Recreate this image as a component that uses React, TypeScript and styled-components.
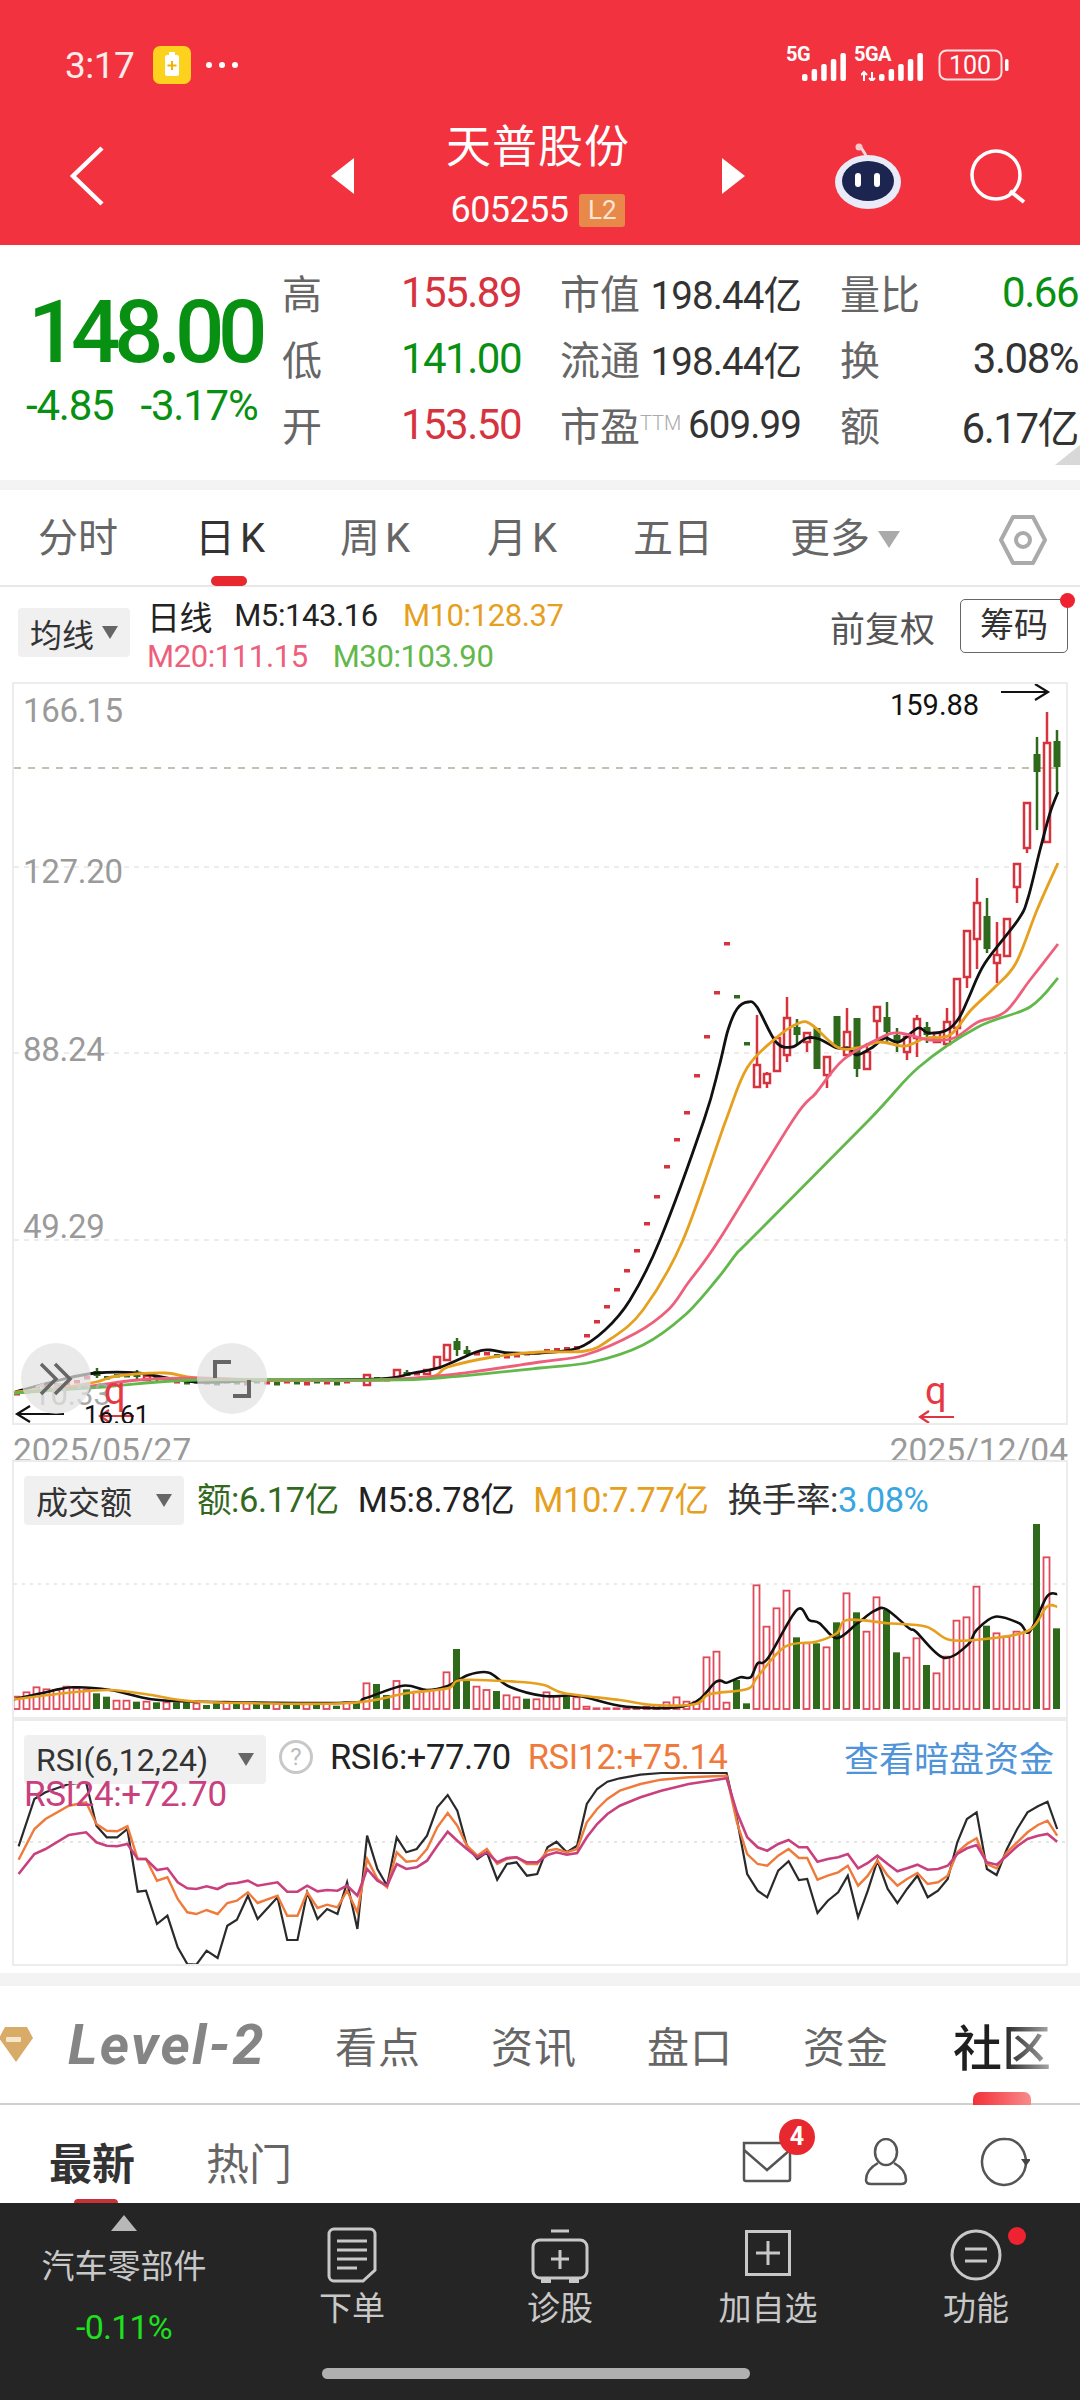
import React from 'react';
import styled, { createGlobalStyle } from 'styled-components';

const FONT = `Roboto, 'Noto Sans CJK SC', sans-serif`;
const RED = '#d6333f';
const UP_GREEN = '#089012';
const GREEN = '#33691e';
const ORANGE = '#e6a01e';
const PINK = '#ee5f7c';
const LIME = '#62b84a';

const GlobalStyle = createGlobalStyle`
  html, body { margin: 0; padding: 0; background: #fff; }
  * { box-sizing: border-box; }
`;

const Page = styled.div`
  width: 1080px;
  height: 2400px;
  overflow: hidden;
  background: #fff;
  font-family: ${FONT};
  color: #333;
`;

/* ---------- red header ---------- */
const Header = styled.header`
  height: 245px;
  background: #f2323e;
  color: #fff;
  padding-top: 44px;
`;
const StatusBar = styled.div`
  height: 42px;
  padding: 0 71px 0 65px;
  display: flex;
  align-items: center;
`;
const Time = styled.span`
  font-size: 37px;
  letter-spacing: -0.5px;
  color: #fdecec;
  width: 88px;
`;
const StatusRight = styled.div`
  margin-left: auto;
  display: flex;
  align-items: flex-end;
  gap: 14px;
  position: relative;
`;
const NetTag = styled.span<{ $x: number }>`
  position: absolute;
  left: ${(p) => p.$x}px;
  top: -5px;
  font-size: 20px;
  font-weight: 700;
  line-height: 20px;
  letter-spacing: -0.5px;
`;
const NavIcon = styled.svg<{ $ml?: number }>`
  flex: none;
  margin-left: ${(p) => p.$ml ?? 0}px;
`;
const Nav = styled.div`
  height: 159px;
  padding: 20px 53px 0 70px;
  display: flex;
  align-items: center;
`;
const TitleBlock = styled.div`
  width: 340px;
  margin: 0 20px;
  padding-bottom: 3px;
  display: flex;
  flex-direction: column;
  align-items: center;
`;
const Title = styled.div`
  font-size: 45px;
  line-height: 60px;
  letter-spacing: 1px;
`;
const CodeRow = styled.div`
  display: flex;
  align-items: center;
  gap: 11px;
  margin-top: 12px;
`;
const Code = styled.span`
  font-size: 36px;
  line-height: 40px;
  letter-spacing: -0.6px;
`;
const L2 = styled.span`
  width: 46px;
  height: 33px;
  border-radius: 3px;
  background: #e8894a;
  color: #fbe6d6;
  font-size: 26px;
  line-height: 33px;
  text-align: center;
`;

/* ---------- quote ---------- */
const Quote = styled.section`
  height: 235px;
  display: flex;
  padding-top: 14px;
  position: relative;
`;
const PriceBlock = styled.div`
  width: 282px;
  display: flex;
  flex-direction: column;
  align-items: flex-start;
  color: ${UP_GREEN};
`;
const Price = styled.div`
  font-size: 87px;
  line-height: 100px;
  font-weight: 500;
  letter-spacing: -6.4px;
  margin: 23px 0 0 28px;
`;
const Change = styled.div`
  display: flex;
  gap: 27px;
  font-size: 42px;
  line-height: 40px;
  letter-spacing: -1.2px;
  margin: 4px 0 0 26px;
`;
const QuoteGrid = styled.div`
  width: 796px;
  display: grid;
  grid-template-columns: 239px 241px 238px;
  column-gap: 39px;
  grid-auto-rows: 66px;
  align-items: center;
`;
const Cell = styled.div`
  display: flex;
  justify-content: space-between;
  align-items: center;
`;
const CellLabel = styled.span`
  font-size: 40px;
  color: #666;
  white-space: nowrap;
`;
const Ttm = styled.sup`
  font-size: 20px;
  color: #aaa;
  font-weight: 300;
  line-height: 0;
  vertical-align: 11px;
`;
const CellValue = styled.span<{ $color?: string; $size?: number }>`
  font-size: ${(p) => p.$size ?? 42}px;
  letter-spacing: ${(p) => (p.$size ? -0.9 : -1.5)}px;
  color: ${(p) => p.$color ?? '#333'};
  white-space: nowrap;
`;
const CornerFold = styled.div`
  position: absolute;
  right: 0;
  bottom: 15px;
  width: 0;
  height: 0;
  border-left: 25px solid transparent;
  border-bottom: 20px solid #d8d8d8;
`;
const Band = styled.div<{ $h: number; $mt?: number }>`
  height: ${(p) => p.$h}px;
  margin-top: ${(p) => p.$mt ?? 0}px;
  background: #f3f3f3;
`;

/* ---------- period tabs ---------- */
const PeriodTabs = styled.nav`
  height: 97px;
  position: relative;
  border-bottom: 2px solid #e8e8e8;
`;
const PeriodList = styled.div`
  display: flex;
  padding: 26px 0 0 38px;
`;
const Period = styled.span<{ $active?: boolean; $w?: number; $ls?: number }>`
  width: ${(p) => p.$w ?? 146}px;
  font-size: 40px;
  line-height: 46px;
  letter-spacing: ${(p) => p.$ls ?? 0}px;
  color: ${(p) => (p.$active ? '#333' : '#666')};
  white-space: nowrap;
`;
const PeriodMark = styled.i`
  position: absolute;
  left: 211px;
  bottom: -1px;
  width: 36px;
  height: 10px;
  border-radius: 5px;
  background: #e8282f;
`;
const MoreTri = styled.i`
  display: inline-block;
  margin-left: 8px;
  border-left: 11px solid transparent;
  border-right: 11px solid transparent;
  border-top: 17px solid #aaa;
  vertical-align: 4px;
`;
const HexIcon = styled.svg`
  position: absolute;
  right: 33px;
  top: 24px;
`;

/* ---------- MA legend ---------- */
const Legend = styled.div`
  height: 95px;
  padding: 0 12px 0 18px;
  display: flex;
  align-items: flex-start;
  position: relative;
`;
const DropBtn = styled.div<{ $w: number; $mt?: number }>`
  width: ${(p) => p.$w}px;
  height: 49px;
  margin-top: ${(p) => p.$mt ?? 0}px;
  flex: none;
  border-radius: 4px;
  background: #f0f0f0;
  display: flex;
  align-items: center;
  justify-content: space-between;
  padding: 0 12px;
  font-size: 32px;
  color: #333;
  white-space: nowrap;
`;
const Tri = styled.i`
  flex: none;
  border-left: 8px solid transparent;
  border-right: 8px solid transparent;
  border-top: 13px solid #666;
`;
const LegendLines = styled.div`
  margin: 8px 0 0 17px;
  display: flex;
  flex-direction: column;
`;
const LegendRow = styled.div`
  display: flex;
  gap: 25px;
  height: 41px;
  align-items: center;
`;
const MaText = styled.span<{ $color?: string; $size?: number; $ml?: number; $mr?: number }>`
  font-size: ${(p) => p.$size ?? 31}px;
  letter-spacing: -0.4px;
  margin-left: ${(p) => p.$ml ?? 0}px;
  margin-right: ${(p) => p.$mr ?? 0}px;
  color: ${(p) => p.$color ?? '#222'};
  white-space: nowrap;
`;
const LegendRight = styled.div`
  margin-left: auto;
  padding-top: 12px;
  display: flex;
  align-items: center;
  gap: 25px;
`;
const Rehab = styled.span`
  font-size: 35px;
  color: #555;
`;
const ChipBtn = styled.span`
  width: 108px;
  height: 54px;
  border: 1.5px solid #666;
  border-radius: 5px;
  font-size: 34px;
  line-height: 50px;
  text-align: center;
  color: #333;
`;
const RedDot = styled.i<{ $x: number; $y: number; $s: number }>`
  position: absolute;
  left: ${(p) => p.$x}px;
  top: ${(p) => p.$y}px;
  width: ${(p) => p.$s}px;
  height: ${(p) => p.$s}px;
  border-radius: 50%;
  background: #ee2230;
`;

/* ---------- charts ---------- */
const ChartBox = styled.div<{ $h: number; $mt?: number }>`
  position: relative;
  width: 1056px;
  height: ${(p) => p.$h}px;
  margin: ${(p) => p.$mt ?? 0}px 0 0 12px;
  border: 2px solid #ececec;
  overflow: hidden;
`;
const ChartSvg = styled.svg`
  position: absolute;
  left: 0;
  top: 0;
  display: block;
`;
const AxisLabel = styled.span<{ $y: number }>`
  position: absolute;
  left: 9px;
  top: ${(p) => p.$y}px;
  font-size: 33px;
  line-height: 36px;
  letter-spacing: -0.3px;
  color: #9a9a9a;
`;
const Note = styled.span<{ $x: number; $y: number; $color?: string; $size?: number }>`
  position: absolute;
  left: ${(p) => p.$x}px;
  top: ${(p) => p.$y}px;
  font-size: ${(p) => p.$size ?? 29}px;
  line-height: 30px;
  color: ${(p) => p.$color ?? '#111'};
`;
const FloatBtn = styled.div<{ $x: number }>`
  position: absolute;
  left: ${(p) => p.$x}px;
  top: 659px;
  width: 70px;
  height: 71px;
  border-radius: 50%;
  background: rgba(226, 226, 226, 0.72);
  display: flex;
  align-items: center;
  justify-content: center;
`;
const Dates = styled.div`
  height: 36px;
  padding: 10px 12px 0 13px;
  display: flex;
  justify-content: space-between;
  font-size: 33.5px;
  line-height: 32px;
  color: #9a9a9a;
  overflow: hidden;
`;
const ChartBar = styled.div`
  position: absolute;
  left: 10px;
  top: 10px;
  right: 12px;
  display: flex;
  align-items: center;
  gap: 13px;
  & > span {
    margin-bottom: 6px;
  }
`;
const BlueLink = styled.span`
  margin-left: auto;
  font-size: 35px;
  color: #4f94d8;
  white-space: nowrap;
`;
const HelpCircle = styled.span`
  width: 34px;
  height: 34px;
  flex: none;
  border-radius: 50%;
  border: 3px solid #c8c8c8;
  color: #bbb;
  font-size: 24px;
  line-height: 28px;
  text-align: center;
`;
const RsiNote = styled.span`
  position: absolute;
  left: 10px;
  top: 56px;
  font-size: 35px;
  line-height: 36px;
  letter-spacing: -0.4px;
  color: #c9407e;
`;

/* ---------- info tabs ---------- */
const InfoTabs = styled.nav`
  height: 119px;
  position: relative;
  border-bottom: 2px solid #d0d0d0;
  display: flex;
  align-items: center;
  padding: 0 0 0 68px;
`;
const Gem = styled.svg`
  position: absolute;
  left: -1px;
  top: 40px;
`;
const LevelText = styled.span`
  width: 267px;
  font-size: 56px;
  font-weight: 700;
  font-style: italic;
  letter-spacing: 2.3px;
  color: #858585;
`;
const InfoTab = styled.span<{ $w?: number }>`
  width: ${(p) => p.$w ?? 156}px;
  font-size: 42px;
  color: #666;
  letter-spacing: 1px;
`;
const InfoTabLast = styled.span`
  font-size: 49px;
  font-weight: 500;
  white-space: nowrap;
  background: linear-gradient(90deg, #1f1f1f 50%, #aaa 100%);
  -webkit-background-clip: text;
  background-clip: text;
  color: transparent;
`;
const InfoMark = styled.i`
  position: absolute;
  left: 973px;
  bottom: -2px;
  width: 58px;
  height: 13px;
  border-radius: 7px 7px 0 0;
  background: linear-gradient(90deg, #f23038, #f98a8a);
`;

/* ---------- community row ---------- */
const SubTabs = styled.div`
  height: 98px;
  position: relative;
  display: flex;
  align-items: center;
  padding: 13px 0 0 49px;
  gap: 71px;
`;
const SubTab = styled.span<{ $active?: boolean }>`
  font-size: 43px;
  font-weight: ${(p) => (p.$active ? 700 : 400)};
  color: ${(p) => (p.$active ? '#333' : '#666')};
`;
const SubMark = styled.i`
  position: absolute;
  left: 74px;
  bottom: -2px;
  width: 44px;
  height: 6px;
  border-radius: 4px 4px 0 0;
  background: #c93236;
`;
const SubIcons = styled.div`
  margin-left: auto;
  padding: 3px 50px 0 0;
  display: flex;
  align-items: center;
  gap: 72px;
  position: relative;
`;
const Badge = styled.span`
  position: absolute;
  left: 37px;
  top: -15px;
  width: 36px;
  height: 36px;
  border-radius: 50%;
  background: #e8282f;
  color: #fff;
  font-size: 25px;
  font-weight: 700;
  line-height: 36px;
  text-align: center;
`;

/* ---------- dark bottom bar ---------- */
const BottomBar = styled.footer`
  height: 197px;
  background: #252525;
  position: relative;
  display: flex;
  padding-top: 12px;
  color: #c8c8c8;
`;
const Sector = styled.div`
  width: 248px;
  display: flex;
  flex-direction: column;
  align-items: center;
`;
const SectorTri = styled.i`
  border-left: 13px solid transparent;
  border-right: 13px solid transparent;
  border-bottom: 16px solid #b8b8b8;
`;
const SectorName = styled.span`
  margin-top: 16px;
  font-size: 33px;
  line-height: 40px;
  white-space: nowrap;
`;
const SectorChange = styled.span`
  margin-top: 20px;
  font-size: 34px;
  line-height: 40px;
  letter-spacing: -0.8px;
  color: #1ee01e;
`;
const Action = styled.div`
  width: 208px;
  display: flex;
  flex-direction: column;
  align-items: center;
  position: relative;
`;
const ActionIcon = styled.svg<{ $mt: number }>`
  display: block;
  margin-top: ${(p) => p.$mt}px;
`;
const ActionLabel = styled.span`
  position: absolute;
  top: 74px;
  font-size: 33px;
  line-height: 40px;
  white-space: nowrap;
`;
const HomeBar = styled.i`
  position: absolute;
  left: 322px;
  top: 165px;
  width: 428px;
  height: 11px;
  border-radius: 6px;
  background: #b0b0b0;
`;

/* ---------- data ---------- */
type Pt = [number, number];

// catmull-rom through the read-off points, MA lines are smooth
const smooth = (pts: Pt[]) => {
  let d = `M${pts[0][0]} ${pts[0][1]}`;
  for (let i = 0; i < pts.length - 1; i++) {
    const p0 = pts[i - 1] ?? pts[i];
    const p1 = pts[i];
    const p2 = pts[i + 1];
    const p3 = pts[i + 2] ?? p2;
    const c1x = p1[0] + (p2[0] - p0[0]) / 6;
    const c1y = p1[1] + (p2[1] - p0[1]) / 6;
    const c2x = p2[0] - (p3[0] - p1[0]) / 6;
    const c2y = p2[1] - (p3[1] - p1[1]) / 6;
    d += `C${c1x.toFixed(1)} ${c1y.toFixed(1)} ${c2x.toFixed(1)} ${c2y.toFixed(1)} ${p2[0]} ${p2[1]}`;
  }
  return d;
};

const MA5: Pt[] = [[15,1392],[60,1380],[96,1373],[138,1373],[196,1382],[269,1380],[379,1379],[413,1373],[441,1367],[476,1352],[490,1350],[510,1353],[540,1353],[578,1348],[605,1330],[630,1300],[660,1240],[704,1120],[719,1067],[728,1030],[737,1009],[748,1002],[757,1007],[776,1042],[792,1047],[807,1038],[819,1039],[837,1048],[849,1048],[857,1055],[873,1047],[885,1038],[899,1042],[918,1028],[928,1033],[947,1030],[959,1018],[969,997],[985,963],[1018,920],[1028,898],[1040,850],[1050,813],[1058,792]];
const MA10: Pt[] = [[15,1392],[60,1388],[96,1382],[117,1376],[165,1373],[196,1378],[269,1380],[379,1380],[431,1377],[448,1367],[493,1357],[540,1352],[585,1351],[609,1340],[643,1310],[683,1240],[726,1120],[747,1068],[776,1038],[799,1023],[812,1025],[837,1047],[857,1048],[880,1042],[905,1046],[926,1038],[950,1035],[971,1010],[995,987],[1016,963],[1037,910],[1058,863]];
const MA20: Pt[] = [[14,1393],[83,1387],[138,1380],[193,1378],[269,1380],[379,1380],[448,1375],[540,1362],[585,1355],[636,1333],[668,1310],[688,1283],[719,1240],[793,1120],[816,1093],[843,1060],[880,1038],[899,1033],[930,1040],[954,1038],[978,1022],[1005,1012],[1030,980],[1058,944]];
const MA30: Pt[] = [[14,1393],[103,1387],[196,1380],[379,1380],[438,1378],[540,1368],[592,1362],[643,1345],[685,1315],[718,1278],[737,1253],[750,1240],[869,1120],[919,1067],[978,1027],[1030,1007],[1058,978]];

// [x, bodyTop, bodyBottom, wickTop, wickBottom, color]
type Candle = [number, number, number, number, number, 'r' | 'g'];
const flat = (x: number, y: number, c: 'r' | 'g' = 'r'): Candle => [x, y, y + 3, y, y + 3, c];

const CANDLES: Candle[] = [
  ...[[17,1392],[27,1390],[37,1385],[47,1384],[57,1383],[67,1382],[77,1380],[87,1376]].map(([x, y]) => flat(x, y)),
  [97,1371,1376,1368,1378,'g'],flat(107,1376,'g'),flat(117,1374,'g'),flat(127,1374,'g'),[137,1373,1377,1370,1380,'g'],
  [147,1376,1380,1376,1380,'r'],[157,1376,1380,1375,1381,'g'],flat(167,1378),flat(177,1380),flat(187,1381,'g'),
  ...Array.from({ length: 16 }, (_, i) => flat(197 + i * 10, 1380 + (i % 3), i % 2 ? 'r' : 'g')),
  [367,1375,1385,1375,1385,'r'],[377,1377,1380,1374,1380,'g'],flat(387,1378),[397,1370,1378,1370,1378,'r'],[407,1372,1376,1370,1376,'g'],flat(417,1372),[427,1370,1374,1370,1374,'r'],
  [437,1357,1368,1357,1368,'r'],[447,1345,1360,1345,1360,'r'],[457,1341,1350,1338,1356,'g'],[467,1350,1354,1346,1356,'g'],flat(477,1352),flat(487,1352),flat(497,1354,'g'),flat(507,1355),flat(517,1354),flat(527,1352),flat(537,1351),
  flat(547,1349),flat(557,1348),flat(567,1347),flat(577,1346),flat(587,1334),flat(597,1320),flat(607,1305),flat(617,1288),flat(627,1269),flat(637,1249),
  flat(647,1222),flat(657,1195),flat(667,1165),flat(677,1138),flat(687,1111),flat(697,1074),flat(707,1035),[717,991,994,991,998,'r'],flat(727,942),flat(737,995,'g'),flat(747,1042,'g'),
  [757,1065,1087,1015,1087,'r'],[767,1074,1083,1072,1088,'r'],[777,1038,1071,1038,1071,'r'],[787,1018,1055,997,1062,'r'],[797,1027,1035,1019,1045,'g'],[807,1033,1042,1032,1052,'r'],[817,1028,1069,1028,1069,'g'],[827,1057,1075,1057,1088,'r'],
  [837,1016,1048,1016,1048,'g'],[847,1032,1055,1008,1055,'r'],[857,1018,1069,1018,1077,'g'],[867,1052,1069,1043,1069,'r'],[877,1007,1021,1007,1042,'r'],[887,1017,1032,1002,1042,'g'],[897,1035,1042,1028,1052,'g'],[907,1037,1052,1037,1060,'r'],[917,1019,1038,1015,1057,'r'],[927,1027,1035,1022,1043,'g'],[937,1033,1042,1033,1042,'r'],
  [947,1022,1044,1008,1044,'r'],[957,979,1028,979,1038,'r'],[967,931,977,931,988,'r'],[977,903,939,878,969,'r'],[987,916,949,898,953,'g'],[997,955,963,922,983,'r'],[1007,919,956,919,956,'r'],[1017,864,887,864,903,'r'],[1027,803,848,803,853,'r'],[1037,754,772,737,830,'g'],[1047,743,842,712,842,'r'],[1057,741,767,730,792,'g'],
];

// zoom-read bar tops, negative = green solid
const VOL = [710,697,682,688,690,680,685,690,-700,-710,722,722,-725,725,-727,727,-727,-727,730,-735,-730,725,-732,730,-730,-730,732,-730,-732,730,-732,730,-737,727,-725,670,-672,-705,663,-688,695,692,690,637,-567,-660,680,690,-693,706,712,-716,718,697,710,-710,712,740,745,745,745,745,745,740,735,727,712,725,725,592,575,728,-660,-730,376,500,445,392,-532,550,-550,562,-487,400,-457,515,412,-450,-577,593,535,-615,640,590,482,472,380,-497,520,530,515,515,-192,292,-505];
const VOL_BLACK: Pt[] = [[20,718],[60,700],[105,682],[160,690],[220,718],[290,725],[500,728],[530,715],[585,677],[620,690],[650,678],[680,645],[710,638],[740,680],[790,708],[840,708],[910,740],[1000,735],[1040,665],[1055,668],[1075,652],[1090,652],[1100,610],[1115,595],[1157,450],[1175,480],[1190,490],[1215,535],[1245,490],[1270,452],[1287,448],[1320,505],[1330,515],[1370,593],[1405,555],[1418,510],[1445,470],[1480,490],[1495,515],[1520,410],[1535,402]];
const VOL_ORANGE: Pt[] = [[20,718],[100,698],[160,690],[220,705],[290,725],[500,730],[590,700],[650,685],[670,660],[750,665],[790,675],[820,700],[900,720],[950,735],[1010,732],[1030,703],[1085,687],[1100,650],[1140,560],[1185,545],[1215,520],[1230,480],[1290,490],[1345,500],[1380,540],[1440,535],[1495,510],[1520,440],[1535,440]];

const RSI_X = [27,50,66,100,125,140,155,170,185,200,212,228,243,258,272,285,300,316,330,344,360,374,403,417,432,446,461,475,490,504,519,533,548,562,576,590,605,620,635,650,664,678,693,707,722,736,750,765,780,795,808,823,838,852,867,882,900,930,960,1000,1055,1070,1085,1100,1114,1130,1145,1160,1172,1187,1202,1217,1231,1246,1260,1274,1289,1303,1317,1332,1347,1362,1376,1390,1404,1418,1433,1447,1462,1477,1492,1507,1521,1535];
const RSI6 = [412,270,250,225,220,350,385,385,360,548,545,645,620,715,765,767,725,747,650,632,560,630,565,693,693,550,630,600,615,520,660,380,480,530,385,430,420,380,295,258,305,410,450,430,512,465,460,500,495,415,398,430,410,285,240,218,208,197,192,192,192,330,495,545,565,485,457,513,510,612,575,550,500,625,545,455,540,582,540,500,565,545,510,400,330,310,480,498,420,360,310,292,278,360];
const RSI12 = [452,360,330,290,280,345,365,367,352,450,450,515,505,570,610,615,603,615,582,575,550,582,560,620,620,550,597,587,595,545,610,450,510,535,430,458,455,420,355,312,350,410,440,420,465,450,445,465,465,425,420,430,420,340,300,270,245,225,212,205,200,340,435,465,470,440,420,447,447,512,500,490,470,530,500,455,500,530,510,492,525,520,500,430,405,388,465,478,430,400,370,348,335,380];
const RSI24 = [495,435,420,378,370,400,410,412,405,450,450,483,478,520,538,540,532,540,525,522,515,530,520,548,548,530,547,543,545,530,560,480,515,530,465,480,475,455,410,368,395,420,445,430,460,447,445,460,460,438,430,437,432,385,345,315,290,265,245,225,208,310,385,415,425,405,393,415,415,458,450,445,435,478,462,440,465,487,478,467,482,480,470,435,418,408,460,467,440,412,390,380,375,398];

const CHART = { x: 14, y: 684, w: 1052, h: 739 };
const VOLBOX = { x: 14, y: 1462, w: 1052, h: 256 };
const RSIBOX = { x: 14, y: 1722, w: 1052, h: 243 };

const volX = (z: number) => +(z / 1.452).toFixed(1);
const volY = (z: number) => 1460 + z / 3;
const toVol = (pts: Pt[]) => pts.map(([x, y]): Pt => [volX(x), +volY(y).toFixed(1)]);
const rsiPts = (vals: number[]) => vals.map((v, i) => `${volX(RSI_X[i])},${(1710 + v / 3).toFixed(1)}`).join(' ');

const CandleMark = ({ c }: { c: Candle }) => {
  const [x, top, bottom, wickTop, wickBottom, kind] = c;
  const color = kind === 'r' ? RED : '#2f6a1c';
  const isFlat = bottom - top <= 3;
  if (isFlat) return <rect x={x - 3} y={top} width={6} height={3.5} fill={color} />;
  return (
    <g>
      <line x1={x} x2={x} y1={wickTop} y2={wickBottom} stroke={color} strokeWidth={2.5} />
      {kind === 'r' ? (
        <rect x={x - 3} y={top} width={6} height={bottom - top} fill="#fff" stroke={color} strokeWidth={2.5} />
      ) : (
        <rect x={x - 3.5} y={top} width={7} height={bottom - top} fill={color} />
      )}
    </g>
  );
};

const KlineSvg = () => (
  <ChartSvg width={CHART.w} height={CHART.h} viewBox={`${CHART.x} ${CHART.y} ${CHART.w} ${CHART.h}`}>
    {[867, 1053, 1240].map((y) => (
      <line key={y} x1="14" x2="1066" y1={y} y2={y} stroke="#e6e6e6" strokeWidth="1.5" strokeDasharray="5 5" />
    ))}
    <line x1="14" x2="1063" y1="768" y2="768" stroke="#b5ab95" strokeWidth="1.5" strokeDasharray="7 7" />
    {CANDLES.map((c, i) => (
      <CandleMark key={i} c={c} />
    ))}
    <path d={smooth(MA5)} fill="none" stroke="#111" strokeWidth="2.8" />
    <path d={smooth(MA10)} fill="none" stroke={ORANGE} strokeWidth="2.8" />
    <path d={smooth(MA20)} fill="none" stroke={PINK} strokeWidth="2.8" />
    <path d={smooth(MA30)} fill="none" stroke={LIME} strokeWidth="2.8" />
    {/* high / low arrows */}
    <path d="M1001 692h46m-12-8l13 8-13 8" fill="none" stroke="#111" strokeWidth="2.2" />
    <path d="M64 1414H18m12-8l-13 8 13 8" fill="none" stroke="#111" strokeWidth="2.2" />
    <path d="M134 1416h-33m8-6l-9 6 9 6" fill="none" stroke="#e0353f" strokeWidth="2.2" />
    <path d="M954 1417h-33m8-6l-9 6 9 6" fill="none" stroke="#e0353f" strokeWidth="2.2" />
  </ChartSvg>
);

const VolumeSvg = () => (
  <ChartSvg width={VOLBOX.w} height={VOLBOX.h} viewBox={`${VOLBOX.x} ${VOLBOX.y} ${VOLBOX.w} ${VOLBOX.h}`}>
    <line x1="14" x2="1066" y1="1584" y2="1584" stroke="#e4e4e4" strokeWidth="1.5" strokeDasharray="3 5" />
    {VOL.map((v, i) => {
      const top = volY(Math.abs(v));
      const x = 16.5 + i * 10;
      const h = 1709 - top;
      return v < 0 ? (
        <rect key={i} x={x - 3.5} y={top} width={7} height={h} fill="#2f6a1c" />
      ) : (
        <rect key={i} x={x - 3} y={top} width={6} height={h} fill="#fff" stroke="#de4a5a" strokeWidth={1.8} />
      );
    })}
    <path d={smooth(toVol(VOL_BLACK))} fill="none" stroke="#111" strokeWidth="2.6" />
    <path d={smooth(toVol(VOL_ORANGE))} fill="none" stroke={ORANGE} strokeWidth="2.6" />
  </ChartSvg>
);

const RsiSvg = () => (
  <ChartSvg width={RSIBOX.w} height={RSIBOX.h} viewBox={`${RSIBOX.x} ${RSIBOX.y} ${RSIBOX.w} ${RSIBOX.h}`}>
    <line x1="14" x2="1066" y1="1843" y2="1843" stroke="#ddd" strokeWidth="1.5" strokeDasharray="3 5" />
    <polyline points={rsiPts(RSI6)} fill="none" stroke="#2a2a2a" strokeWidth="2.2" />
    <polyline points={rsiPts(RSI12)} fill="none" stroke="#ef7a3c" strokeWidth="2.4" />
    <polyline points={rsiPts(RSI24)} fill="none" stroke="#c9407e" strokeWidth="2.6" />
  </ChartSvg>
);

const Signal = ({ arrows }: { arrows?: boolean }) => {
  const off = arrows ? 18 : 0;
  const w = off + 45;
  return (
    <svg width={w} height="29" viewBox={`0 0 ${w} 29`}>
      {arrows && <path d="M3 29v-9M0 23l3-3 3 3M11 20v9M8 26l3 3 3-3" stroke="#fff" strokeWidth="2" fill="none" />}
      {[7, 12, 17, 22, 28].map((h, i) => (
        <rect key={i} x={off + i * 9.6} y={29 - h} width="5.5" height={h} rx="2" fill="#fff" />
      ))}
    </svg>
  );
};

const TOP_STATS = [
  { label: '高', value: '155.89', color: RED },
  { label: '市值', value: '198.44亿', size: 38.5 },
  { label: '量比', value: '0.66', color: UP_GREEN },
  { label: '低', value: '141.00', color: UP_GREEN },
  { label: '流通', value: '198.44亿', size: 38.5 },
  { label: '换', value: '3.08%' },
  { label: '开', value: '153.50', color: RED },
  { label: '市盈', ttm: true, value: '609.99', size: 38.5 },
  { label: '额', value: '6.17亿' },
];

export default function App() {
  return (
    <Page>
      <GlobalStyle />
      <Header>
        <StatusBar>
          <Time>3:17</Time>
          <NavIcon width="38" height="38" viewBox="0 0 38 38">
            <rect width="38" height="38" rx="7" fill="#fdd21f" />
            <rect x="12" y="9" width="14" height="21" rx="2" fill="#fff" />
            <rect x="16" y="6" width="6" height="4" fill="#fff" />
            <path d="M19 15v9M14.5 19.5h9" stroke="#f0b400" strokeWidth="2" />
          </NavIcon>
          <NavIcon $ml={12} width="50" height="10" viewBox="0 0 50 10">
            <circle cx="6" cy="5" r="3" fill="#fff" />
            <circle cx="19" cy="5" r="3" fill="#fff" />
            <circle cx="32" cy="5" r="3" fill="#fff" />
          </NavIcon>
          <StatusRight>
            <NetTag $x={-16}>5G</NetTag>
            <Signal />
            <NetTag $x={52}>5GA</NetTag>
            <Signal arrows />
            <svg width="71" height="32" viewBox="0 0 71 32">
              <rect x="1.5" y="1.5" width="62" height="29" rx="7" fill="none" stroke="#fff" strokeWidth="2" opacity="0.85" />
              <rect x="67" y="10" width="3.5" height="12" rx="1.5" fill="#fff" />
              <text x="32" y="25" textAnchor="middle" fontSize="25" fill="#fff" fontFamily="Roboto, sans-serif">100</text>
            </svg>
          </StatusRight>
        </StatusBar>
        <Nav>
          <NavIcon width="36" height="62" viewBox="0 0 36 62">
            <path d="M32 3L3 31l29 28" fill="none" stroke="#fff" strokeWidth="4.5" />
          </NavIcon>
          <NavIcon $ml={225} width="24" height="36" viewBox="0 0 24 36">
            <path d="M23 0v36L0 18z" fill="#fff" />
          </NavIcon>
          <TitleBlock>
            <Title>天普股份</Title>
            <CodeRow>
              <Code>605255</Code>
              <L2>L2</L2>
            </CodeRow>
          </TitleBlock>
          <NavIcon width="24" height="36" viewBox="0 0 24 36">
            <path d="M1 0v36l23-18z" fill="#fff" />
          </NavIcon>
          <NavIcon $ml={88} width="70" height="66" viewBox="0 0 70 66">
            <path d="M34 16C32 8 28 6 27 3" stroke="#f4d8de" strokeWidth="3" fill="none" />
            <circle cx="26" cy="4" r="3.5" fill="#f6c9cf" />
            <ellipse cx="35" cy="39" rx="33" ry="27" fill="#e9ecf8" />
            <ellipse cx="35" cy="38" rx="26" ry="20" fill="#1b2550" />
            <rect x="22" y="30" width="6" height="14" rx="3" fill="#fff" />
            <rect x="41" y="30" width="6" height="14" rx="3" fill="#fff" />
          </NavIcon>
          <NavIcon $ml={66} width="58" height="56" viewBox="0 0 58 56">
            <circle cx="27" cy="27" r="24" fill="none" stroke="#fff" strokeWidth="3.5" />
            <path d="M41 43l14 11" stroke="#fff" strokeWidth="4" />
          </NavIcon>
        </Nav>
      </Header>

      <Quote>
        <PriceBlock>
          <Price>148.00</Price>
          <Change>
            <span>-4.85</span>
            <span>-3.17%</span>
          </Change>
        </PriceBlock>
        <QuoteGrid>
          {TOP_STATS.map((s) => (
            <Cell key={s.label}>
              <CellLabel>
                {s.label}
                {s.ttm && <Ttm>TTM</Ttm>}
              </CellLabel>
              <CellValue $color={s.color} $size={s.size}>
                {s.value}
              </CellValue>
            </Cell>
          ))}
        </QuoteGrid>
        <CornerFold />
      </Quote>
      <Band $h={10} />

      <PeriodTabs>
        <PeriodList>
          <Period $w={157}>分时</Period>
          <Period $active $w={145} $ls={5}>日K</Period>
          <Period $w={147} $ls={5}>周K</Period>
          <Period $w={146} $ls={5}>月K</Period>
          <Period $w={157}>五日</Period>
          <Period>
            更多
            <MoreTri />
          </Period>
        </PeriodList>
        <PeriodMark />
        <HexIcon width="48" height="52" viewBox="0 0 48 52">
          <path d="M14 3h20l12 23-12 23H14L2 26z" fill="none" stroke="#aaa" strokeWidth="4" strokeLinejoin="round" />
          <circle cx="24" cy="26" r="7" fill="none" stroke="#aaa" strokeWidth="4" />
        </HexIcon>
      </PeriodTabs>

      <Legend>
        <DropBtn $w={112} $mt={21}>
          均线
          <Tri />
        </DropBtn>
        <LegendLines>
          <LegendRow>
            <MaText $size={33} $mr={-3}>日线</MaText>
            <MaText>M5:143.16</MaText>
            <MaText $color={ORANGE}>M10:128.37</MaText>
          </LegendRow>
          <LegendRow>
            <MaText $color={PINK}>M20:111.15</MaText>
            <MaText $color={LIME}>M30:103.90</MaText>
          </LegendRow>
        </LegendLines>
        <LegendRight>
          <Rehab>前复权</Rehab>
          <ChipBtn>筹码</ChipBtn>
        </LegendRight>
        <RedDot $x={1060} $y={6} $s={15} />
      </Legend>

      <ChartBox $h={743}>
        <KlineSvg />
        <AxisLabel $y={9}>166.15</AxisLabel>
        <AxisLabel $y={170}>127.20</AxisLabel>
        <AxisLabel $y={348}>88.24</AxisLabel>
        <AxisLabel $y={525}>49.29</AxisLabel>
        <Note $x={876} $y={6}>159.88</Note>
        <Note $x={19} $y={696} $color="#a8a8a8" $size={31}>10.33</Note>
        <Note $x={90} $y={692} $color="#e53a44" $size={38}>q</Note>
        <Note $x={911} $y={692} $color="#e53a44" $size={38}>q</Note>
        <Note $x={70} $y={716} $size={26}>16.61</Note>
        <FloatBtn $x={7}>
          <svg width="34" height="36" viewBox="0 0 34 36">
            <path d="M2 3l15 15L2 33M16 3l15 15-15 15" fill="none" stroke="#666" strokeWidth="3.5" />
          </svg>
        </FloatBtn>
        <FloatBtn $x={183}>
          <svg width="38" height="38" viewBox="0 0 38 38">
            <path d="M18 2H2v16M20 36h16V20" fill="none" stroke="#666" strokeWidth="4" />
          </svg>
        </FloatBtn>
      </ChartBox>
      <Dates>
        <span>2025/05/27</span>
        <span>2025/12/04</span>
      </Dates>

      <ChartBox $h={259} $mt={-1}>
        <VolumeSvg />
        <ChartBar>
          <DropBtn $w={160}>
            成交额
            <Tri />
          </DropBtn>
          <MaText $color={GREEN} $size={34.5}>额:6.17亿</MaText>
          <MaText $size={34.5} $ml={6}>M5:8.78亿</MaText>
          <MaText $color={ORANGE} $size={34.5} $ml={6}>M10:7.77亿</MaText>
          <MaText $size={34.5} $color="#333" $ml={6}>
            换手率:<MaText $color="#3aa6e0" $size={34.5}>3.08%</MaText>
          </MaText>
        </ChartBar>
      </ChartBox>

      <ChartBox $h={247}>
        <RsiSvg />
        <ChartBar>
          <DropBtn $w={242}>
            RSI(6,12,24)
            <Tri />
          </DropBtn>
          <HelpCircle>?</HelpCircle>
          <MaText $size={34.5} $ml={4}>RSI6:+77.70</MaText>
          <MaText $color="#ef7a3c" $size={34.5} $ml={4}>RSI12:+75.14</MaText>
          <BlueLink>查看暗盘资金</BlueLink>
        </ChartBar>
        <RsiNote>RSI24:+72.70</RsiNote>
      </ChartBox>
      <Band $h={13} $mt={7} />

      <InfoTabs>
        <Gem width="34" height="36" viewBox="0 0 34 36">
          <path d="M6 1h22l6 11-17 24L0 12z" fill="#d8ab68" />
          <rect x="7" y="11" width="15" height="5" rx="1" fill="#f6e6cc" />
        </Gem>
        <LevelText>Level-2</LevelText>
        <InfoTab>看点</InfoTab>
        <InfoTab>资讯</InfoTab>
        <InfoTab>盘口</InfoTab>
        <InfoTab $w={150}>资金</InfoTab>
        <InfoTabLast>社区</InfoTabLast>
        <InfoMark />
      </InfoTabs>

      <SubTabs>
        <SubTab $active>最新</SubTab>
        <SubTab>热门</SubTab>
        <SubMark />
        <SubIcons>
          <svg width="50" height="42" viewBox="0 0 50 42">
            <path d="M2 2h46v36a2 2 0 0 1-2 2H4a2 2 0 0 1-2-2z" fill="none" stroke="#555" strokeWidth="2.5" />
            <path d="M2 9l23 20 23-20" fill="none" stroke="#555" strokeWidth="2.5" />
          </svg>
          <Badge>4</Badge>
          <svg width="44" height="48" viewBox="0 0 44 48">
            <ellipse cx="22" cy="14" rx="11" ry="13" fill="none" stroke="#555" strokeWidth="2.5" />
            <path d="M14 25C5 30 2 36 2 42c0 3 2 4 5 4h30c3 0 5-1 5-4 0-6-3-12-12-17" fill="none" stroke="#555" strokeWidth="2.5" />
          </svg>
          <svg width="50" height="50" viewBox="0 0 50 50">
            <path d="M46 25a22 23 0 1 1-20-23c10 0 18 8 20 21" fill="none" stroke="#555" strokeWidth="2.5" />
            <path d="M41 22h10l-5 7z" fill="#444" />
          </svg>
        </SubIcons>
      </SubTabs>

      <BottomBar>
        <Sector>
          <SectorTri />
          <SectorName>汽车零部件</SectorName>
          <SectorChange>-0.11%</SectorChange>
        </Sector>
        <Action>
          <ActionIcon $mt={12} width="50" height="56" viewBox="0 0 50 56">
            <path d="M7 2h36a5 5 0 0 1 5 5v36L36 54H7a5 5 0 0 1-5-5V7a5 5 0 0 1 5-5z" fill="none" stroke="#c8c8c8" strokeWidth="3" />
            <path d="M10 14h30M10 23h30M10 32h30M10 41h20" stroke="#c8c8c8" strokeWidth="3" />
          </ActionIcon>
          <ActionLabel>下单</ActionLabel>
        </Action>
        <Action>
          <ActionIcon $mt={14} width="58" height="56" viewBox="0 0 58 56">
            <path d="M20 2h18" stroke="#c8c8c8" strokeWidth="3" />
            <rect x="2" y="11" width="54" height="38" rx="7" fill="none" stroke="#c8c8c8" strokeWidth="3" />
            <path d="M29 21v19M20 30h18" stroke="#c8c8c8" strokeWidth="3" />
            <path d="M10 49v5h10v-5M38 49v5h10v-5" fill="#c8c8c8" />
          </ActionIcon>
          <ActionLabel>诊股</ActionLabel>
        </Action>
        <Action>
          <ActionIcon $mt={15} width="46" height="46" viewBox="0 0 46 46">
            <rect x="1.5" y="1.5" width="43" height="43" fill="none" stroke="#c8c8c8" strokeWidth="3" />
            <path d="M23 11v24M11 23h24" stroke="#c8c8c8" strokeWidth="3" />
          </ActionIcon>
          <ActionLabel>加自选</ActionLabel>
        </Action>
        <Action>
          <ActionIcon $mt={14} width="52" height="52" viewBox="0 0 52 52">
            <circle cx="26" cy="26" r="24" fill="none" stroke="#c8c8c8" strokeWidth="3" />
            <path d="M15 20h22M15 32h22" stroke="#c8c8c8" strokeWidth="3" />
          </ActionIcon>
          <RedDot $x={136} $y={12} $s={18} />
          <ActionLabel>功能</ActionLabel>
        </Action>
        <HomeBar />
      </BottomBar>
    </Page>
  );
}
